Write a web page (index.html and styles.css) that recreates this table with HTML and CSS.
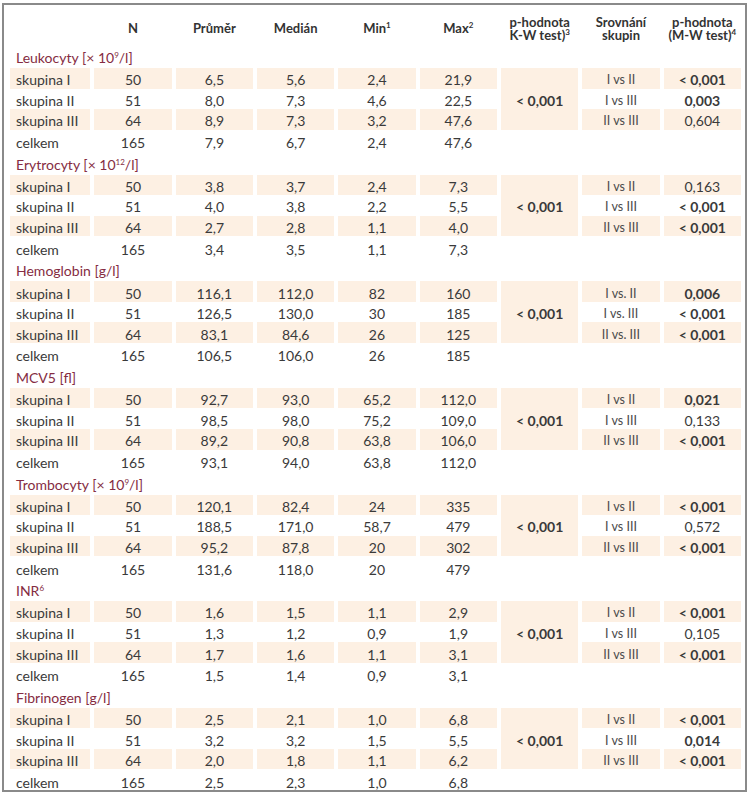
FILE: index.html
```html
<!DOCTYPE html>
<html lang="cs">
<head>
    <meta charset="UTF-8">
    <title>Laboratorní hodnoty podle skupin</title>
    <link rel="stylesheet" href="styles.css">
</head>
<body>
    <div class="table-wrap">
        <table class="lab-table">
            <colgroup>
                <col class="c-label">
                <col span="8" class="c-val">
            </colgroup>
            <thead>
                <tr>
                    <th></th>
                    <th>N</th>
                    <th>Průměr</th>
                    <th>Medián</th>
                    <th>Min<sup>1</sup></th>
                    <th>Max<sup>2</sup></th>
                    <th>p-hodnota<br>K-W test)<sup>3</sup></th>
                    <th>Srovnání<br>skupin</th>
                    <th>p-hodnota<br>(M-W test)<sup>4</sup></th>
                </tr>
            </thead>
            <tbody>
                <!-- Leukocyty -->
                <tr class="section"><td colspan="9">Leukocyty [× 10<sup>9</sup>/l]</td></tr>
                <tr class="grp odd">
                    <td class="label">skupina I</td><td>50</td><td>6,5</td><td>5,6</td><td>2,4</td><td>21,9</td>
                    <td class="kw" rowspan="3">&lt; 0,001</td><td class="cmp">I vs II</td><td class="strong">&lt; 0,001</td>
                </tr>
                <tr class="grp">
                    <td class="label">skupina II</td><td>51</td><td>8,0</td><td>7,3</td><td>4,6</td><td>22,5</td>
                    <td class="cmp">I vs III</td><td class="strong">0,003</td>
                </tr>
                <tr class="grp odd">
                    <td class="label">skupina III</td><td>64</td><td>8,9</td><td>7,3</td><td>3,2</td><td>47,6</td>
                    <td class="cmp">II vs III</td><td>0,604</td>
                </tr>
                <tr class="total">
                    <td class="label">celkem</td><td>165</td><td>7,9</td><td>6,7</td><td>2,4</td><td>47,6</td>
                    <td></td><td></td><td></td>
                </tr>

                <!-- Erytrocyty -->
                <tr class="section"><td colspan="9">Erytrocyty [× 10<sup>12</sup>/l]</td></tr>
                <tr class="grp odd">
                    <td class="label">skupina I</td><td>50</td><td>3,8</td><td>3,7</td><td>2,4</td><td>7,3</td>
                    <td class="kw" rowspan="3">&lt; 0,001</td><td class="cmp">I vs II</td><td>0,163</td>
                </tr>
                <tr class="grp">
                    <td class="label">skupina II</td><td>51</td><td>4,0</td><td>3,8</td><td>2,2</td><td>5,5</td>
                    <td class="cmp">I vs III</td><td class="strong">&lt; 0,001</td>
                </tr>
                <tr class="grp odd">
                    <td class="label">skupina III</td><td>64</td><td>2,7</td><td>2,8</td><td>1,1</td><td>4,0</td>
                    <td class="cmp">II vs III</td><td class="strong">&lt; 0,001</td>
                </tr>
                <tr class="total">
                    <td class="label">celkem</td><td>165</td><td>3,4</td><td>3,5</td><td>1,1</td><td>7,3</td>
                    <td></td><td></td><td></td>
                </tr>

                <!-- Hemoglobin -->
                <tr class="section"><td colspan="9">Hemoglobin [g/l]</td></tr>
                <tr class="grp odd">
                    <td class="label">skupina I</td><td>50</td><td>116,1</td><td>112,0</td><td>82</td><td>160</td>
                    <td class="kw" rowspan="3">&lt; 0,001</td><td class="cmp">I vs. II</td><td class="strong">0,006</td>
                </tr>
                <tr class="grp">
                    <td class="label">skupina II</td><td>51</td><td>126,5</td><td>130,0</td><td>30</td><td>185</td>
                    <td class="cmp">I vs. III</td><td class="strong">&lt; 0,001</td>
                </tr>
                <tr class="grp odd">
                    <td class="label">skupina III</td><td>64</td><td>83,1</td><td>84,6</td><td>26</td><td>125</td>
                    <td class="cmp">II vs. III</td><td class="strong">&lt; 0,001</td>
                </tr>
                <tr class="total">
                    <td class="label">celkem</td><td>165</td><td>106,5</td><td>106,0</td><td>26</td><td>185</td>
                    <td></td><td></td><td></td>
                </tr>

                <!-- MCV -->
                <tr class="section"><td colspan="9">MCV5 [fl]</td></tr>
                <tr class="grp odd">
                    <td class="label">skupina I</td><td>50</td><td>92,7</td><td>93,0</td><td>65,2</td><td>112,0</td>
                    <td class="kw" rowspan="3">&lt; 0,001</td><td class="cmp">I vs II</td><td class="strong">0,021</td>
                </tr>
                <tr class="grp">
                    <td class="label">skupina II</td><td>51</td><td>98,5</td><td>98,0</td><td>75,2</td><td>109,0</td>
                    <td class="cmp">I vs III</td><td>0,133</td>
                </tr>
                <tr class="grp odd">
                    <td class="label">skupina III</td><td>64</td><td>89,2</td><td>90,8</td><td>63,8</td><td>106,0</td>
                    <td class="cmp">II vs III</td><td class="strong">&lt; 0,001</td>
                </tr>
                <tr class="total">
                    <td class="label">celkem</td><td>165</td><td>93,1</td><td>94,0</td><td>63,8</td><td>112,0</td>
                    <td></td><td></td><td></td>
                </tr>

                <!-- Trombocyty -->
                <tr class="section"><td colspan="9">Trombocyty [× 10<sup>9</sup>/l]</td></tr>
                <tr class="grp odd">
                    <td class="label">skupina I</td><td>50</td><td>120,1</td><td>82,4</td><td>24</td><td>335</td>
                    <td class="kw" rowspan="3">&lt; 0,001</td><td class="cmp">I vs II</td><td class="strong">&lt; 0,001</td>
                </tr>
                <tr class="grp">
                    <td class="label">skupina II</td><td>51</td><td>188,5</td><td>171,0</td><td>58,7</td><td>479</td>
                    <td class="cmp">I vs III</td><td>0,572</td>
                </tr>
                <tr class="grp odd">
                    <td class="label">skupina III</td><td>64</td><td>95,2</td><td>87,8</td><td>20</td><td>302</td>
                    <td class="cmp">II vs III</td><td class="strong">&lt; 0,001</td>
                </tr>
                <tr class="total">
                    <td class="label">celkem</td><td>165</td><td>131,6</td><td>118,0</td><td>20</td><td>479</td>
                    <td></td><td></td><td></td>
                </tr>

                <!-- INR -->
                <tr class="section"><td colspan="9">INR<sup>6</sup></td></tr>
                <tr class="grp odd">
                    <td class="label">skupina I</td><td>50</td><td>1,6</td><td>1,5</td><td>1,1</td><td>2,9</td>
                    <td class="kw" rowspan="3">&lt; 0,001</td><td class="cmp">I vs II</td><td class="strong">&lt; 0,001</td>
                </tr>
                <tr class="grp">
                    <td class="label">skupina II</td><td>51</td><td>1,3</td><td>1,2</td><td>0,9</td><td>1,9</td>
                    <td class="cmp">I vs III</td><td>0,105</td>
                </tr>
                <tr class="grp odd">
                    <td class="label">skupina III</td><td>64</td><td>1,7</td><td>1,6</td><td>1,1</td><td>3,1</td>
                    <td class="cmp">II vs III</td><td class="strong">&lt; 0,001</td>
                </tr>
                <tr class="total">
                    <td class="label">celkem</td><td>165</td><td>1,5</td><td>1,4</td><td>0,9</td><td>3,1</td>
                    <td></td><td></td><td></td>
                </tr>

                <!-- Fibrinogen -->
                <tr class="section"><td colspan="9">Fibrinogen [g/l]</td></tr>
                <tr class="grp odd">
                    <td class="label">skupina I</td><td>50</td><td>2,5</td><td>2,1</td><td>1,0</td><td>6,8</td>
                    <td class="kw" rowspan="3">&lt; 0,001</td><td class="cmp">I vs II</td><td class="strong">&lt; 0,001</td>
                </tr>
                <tr class="grp">
                    <td class="label">skupina II</td><td>51</td><td>3,2</td><td>3,2</td><td>1,5</td><td>5,5</td>
                    <td class="cmp">I vs III</td><td class="strong">0,014</td>
                </tr>
                <tr class="grp odd">
                    <td class="label">skupina III</td><td>64</td><td>2,0</td><td>1,8</td><td>1,1</td><td>6,2</td>
                    <td class="cmp">II vs III</td><td class="strong">&lt; 0,001</td>
                </tr>
                <tr class="total">
                    <td class="label">celkem</td><td>165</td><td>2,5</td><td>2,3</td><td>1,0</td><td>6,8</td>
                    <td></td><td></td><td></td>
                </tr>
            </tbody>
        </table>
    </div>
</body>
</html>
```

FILE: styles.css
```css
body {
    margin: 0;
    background: white;
    font-family: Lato, "Open Sans", sans-serif;
    color: #3a3a3a;
}

.table-wrap {
    margin: 3px 1px 0 2px;
    width: 745px;
    border: 2px solid #8a8a8a;
    padding-left: 2px;
    box-sizing: border-box;
}

.lab-table {
    border-collapse: separate;
    border-spacing: 4px 0;
    table-layout: fixed;
    width: 739px;
    font-size: 14px;
}

.c-label {
    width: 80px;
}

.c-val {
    width: 77px;
}

.lab-table td,
.lab-table th {
    padding: 0;
    text-align: center;
    line-height: 14px;
}

.lab-table sup {
    font-size: 8px;
    line-height: 0;
    vertical-align: 5px;
}

.lab-table thead tr {
    height: 39px;
}

.lab-table thead th {
    padding-top: 8px;
    font-size: 13px;
    line-height: 13px;
    font-weight: bold;
    color: #333;
    vertical-align: middle;
}

.section {
    height: 24px;
}

.lab-table .section td {
    text-align: left;
    padding: 0 0 2px 6px;
    vertical-align: bottom;
    line-height: 16px;
    color: #852c42;
}

.grp {
    height: 20.55px;
}

.lab-table .grp td {
    padding-top: 4px;
}

.total {
    height: 21px;
}

.lab-table .total td {
    padding-top: 6px;
}

.lab-table .label {
    text-align: left;
    padding-left: 6px;
}

.odd td,
.kw {
    background: #fdf0e3;
}

.kw {
    font-weight: bold;
}

.cmp {
    font-size: 12.5px;
    color: #4a4a4a;
}

.strong {
    font-weight: bold;
}
```
